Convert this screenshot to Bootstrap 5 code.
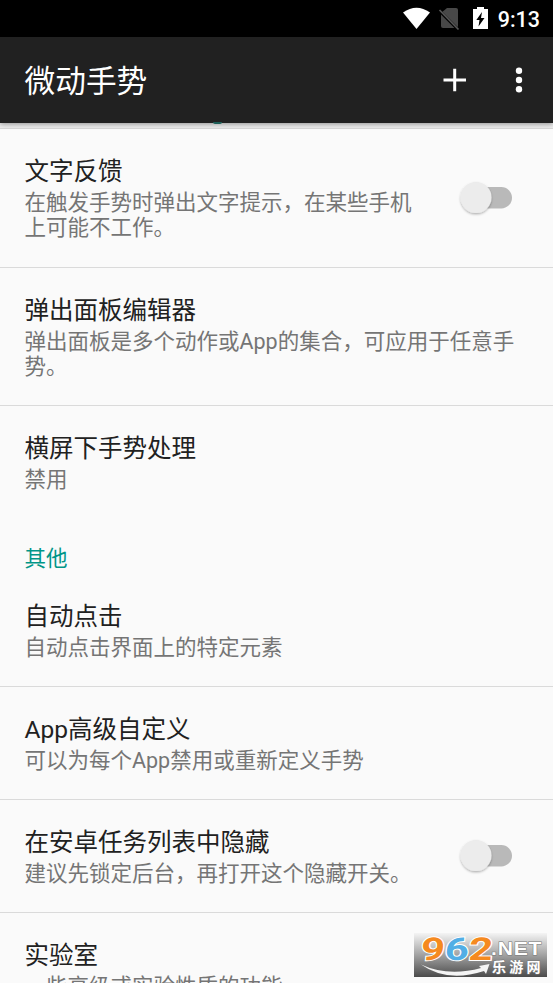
<!DOCTYPE html>
<html lang="zh-CN">
<head>
<meta charset="utf-8">
<meta name="viewport" content="width=device-width, initial-scale=1">
<title>微动手势</title>
<link href="https://cdn.jsdelivr.net/npm/bootstrap@5.3.0/dist/css/bootstrap.min.css" rel="stylesheet">
<style>
html, body { height: 100%; }
body { font-family: Roboto, "Noto Sans CJK SC", sans-serif; background: #fafafa; color: #212121; }
.screen { height: 983px; width: 553px; }
.status { height: 37px; background: #000; color: #fff; padding-right: 13px; font-size: 21.5px; font-weight: 500; line-height: 39px; }
.appbar { height: 86px; background: #212121; padding: 0 29px 0 24.5px; color: #fff; box-shadow: 0 1px 5px rgba(0,0,0,.4); z-index: 2; }
.app-title { font-size: 30.7px; line-height: 40px; font-weight: 400; padding-top: 3px; }
.sliver { height: 6px; background: #ececec; border-bottom: 1px solid #d8d8d8; }
.peek { left: 213px; bottom: -1px; width: 9px; height: 2px; border-radius: 0 0 5px 5px; background: #1d5f58; }
.pref { height: 113px; padding: 25px 24px 0 24.5px; border-bottom: 1px solid #dadada; }
.pref-tall { height: 138px; }
.pref-first { height: 139px; }
.pref-title { font-size: 24.5px; line-height: 36px; font-weight: 400; white-space: nowrap; }
.pref-sum { font-size: 21.5px; line-height: 25px; color: #757575; }
.narrow { width: 400px; }
.category { height: 55px; padding: 27px 24px 0 24.5px; font-size: 21.5px; line-height: 26px; color: #009688; }
.toggle { width: 56px; height: 38px; margin: 12px 16.5px 0 0; }
.toggle-tall { margin-top: 25px; }
.watermark { right: 6px; bottom: 6px; width: 133px; height: 44px; }
</style>
<script src="https://cdn.jsdelivr.net/npm/bootstrap@5.3.0/dist/js/bootstrap.bundle.min.js"></script>
</head>
<body class="overflow-hidden">
<svg width="0" height="0" class="position-absolute" aria-hidden="true">
  <defs>
    <filter id="knob" x="-30%" y="-30%" width="160%" height="160%"><feDropShadow dx="0" dy="1.3" stdDeviation="1" flood-opacity=".3"/></filter>
    <linearGradient id="plate" x1="0" y1="0" x2="0" y2="1"><stop offset="0" stop-color="#f4f4f4"/><stop offset=".5" stop-color="#a2a2a2"/><stop offset="1" stop-color="#4b4b4b"/></linearGradient>
    <symbol id="switch" viewBox="0 0 56 38"><rect x="16" y="8" width="39" height="21.5" rx="10.7" fill="#b9b9b9"/><circle cx="19" cy="18.5" r="15.5" fill="#ececec" filter="url(#knob)"/></symbol>
  </defs>
</svg>
<div class="screen position-relative overflow-hidden d-flex flex-column">
  <div class="status d-flex flex-shrink-0 justify-content-end">
    <svg class="me-1" width="91" height="37" viewBox="0 0 91 37">
      <path d="M0 12.5Q13.5 3 27 12.5L13.5 29Z" fill="#fff"/>
      <path d="M44 8H53Q55 8 55 10V26Q55 28 53 28H40Q38 28 38 26V13Z" fill="#484848"/>
      <path d="M35.5 10L55.5 30" stroke="#000" stroke-width="3"/>
      <path d="M36.5 10L55.5 29.5" stroke="#585858" stroke-width="1.7"/>
      <path d="M70 9H74V7H81V9H85V29H70Z" fill="#fff"/>
      <path d="M79 12L73.3 20H76.5L75.5 26.5L81.5 18H78Z" fill="#000"/>
    </svg>
    <span>9:13</span>
  </div>
  <header class="appbar d-flex flex-shrink-0 align-items-center position-relative">
    <h1 class="app-title m-0 me-auto">微动手势</h1>
    <svg width="90" height="40" viewBox="0 0 90 40" aria-label="添加与更多">
      <path d="M9.5 20H32M20.7 8.8V31.2" stroke="#fff" stroke-width="3"/>
      <g fill="#fff"><circle cx="85" cy="10.7" r="3.2"/><circle cx="85" cy="20" r="3.2"/><circle cx="85" cy="29.2" r="3.2"/></g>
    </svg>
    <span class="peek position-absolute"></span>
  </header>
  <div class="sliver flex-shrink-0"></div>
  <main>
    <section class="pref pref-first d-flex justify-content-between">
      <div class="narrow"><div class="pref-title">文字反馈</div><div class="pref-sum">在触发手势时弹出文字提示，在某些手机<br>上可能不工作。</div></div>
      <svg class="toggle toggle-tall flex-shrink-0"><use href="#switch"/></svg>
    </section>
    <section class="pref pref-tall"><div class="pref-title">弹出面板编辑器</div><div class="pref-sum">弹出面板是多个动作或App的集合，可应用于任意手<br>势。</div></section>
    <section class="pref border-0"><div class="pref-title">横屏下手势处理</div><div class="pref-sum">禁用</div></section>
    <div class="category">其他</div>
    <section class="pref"><div class="pref-title">自动点击</div><div class="pref-sum">自动点击界面上的特定元素</div></section>
    <section class="pref"><div class="pref-title">App高级自定义</div><div class="pref-sum">可以为每个App禁用或重新定义手势</div></section>
    <section class="pref d-flex justify-content-between">
      <div class="narrow"><div class="pref-title">在安卓任务列表中隐藏</div><div class="pref-sum">建议先锁定后台，再打开这个隐藏开关。</div></div>
      <svg class="toggle flex-shrink-0"><use href="#switch"/></svg>
    </section>
    <section class="pref border-0"><div class="pref-title">实验室</div><div class="pref-sum">一些高级或实验性质的功能</div></section>
  </main>
  <svg class="watermark position-absolute" viewBox="0 0 133 44">
    <rect width="133" height="44" fill="url(#plate)"/>
    <g transform="translate(6 27) skewX(-5) scale(1.33 1)" font-family="Roboto, sans-serif" font-weight="700" font-size="31.5" stroke="#fff" stroke-width="2" paint-order="stroke">
      <text x="0" y="0"><tspan fill="#f58a1f">9</tspan><tspan fill="#52aee5">6</tspan><tspan fill="#f58a1f">2</tspan></text>
    </g>
    <path d="M7 31.5Q34 44 67 35L65 33L75.5 31L72 41L70 38Q33 50 7 31.5Z" fill="#f4f4f4"/>
    <g fill="#fff" stroke="#777" stroke-width="1" paint-order="stroke">
      <text transform="translate(77 21.5) scale(1.14 1)" font-family="Liberation Sans, sans-serif" font-weight="700" font-size="18.5" letter-spacing=".7">.NET</text>
      <text x="78" y="39" font-family="Noto Sans CJK SC, sans-serif" font-weight="700" font-size="14" letter-spacing="3.2">乐游网</text>
    </g>
  </svg>
</div>
</body>
</html>
